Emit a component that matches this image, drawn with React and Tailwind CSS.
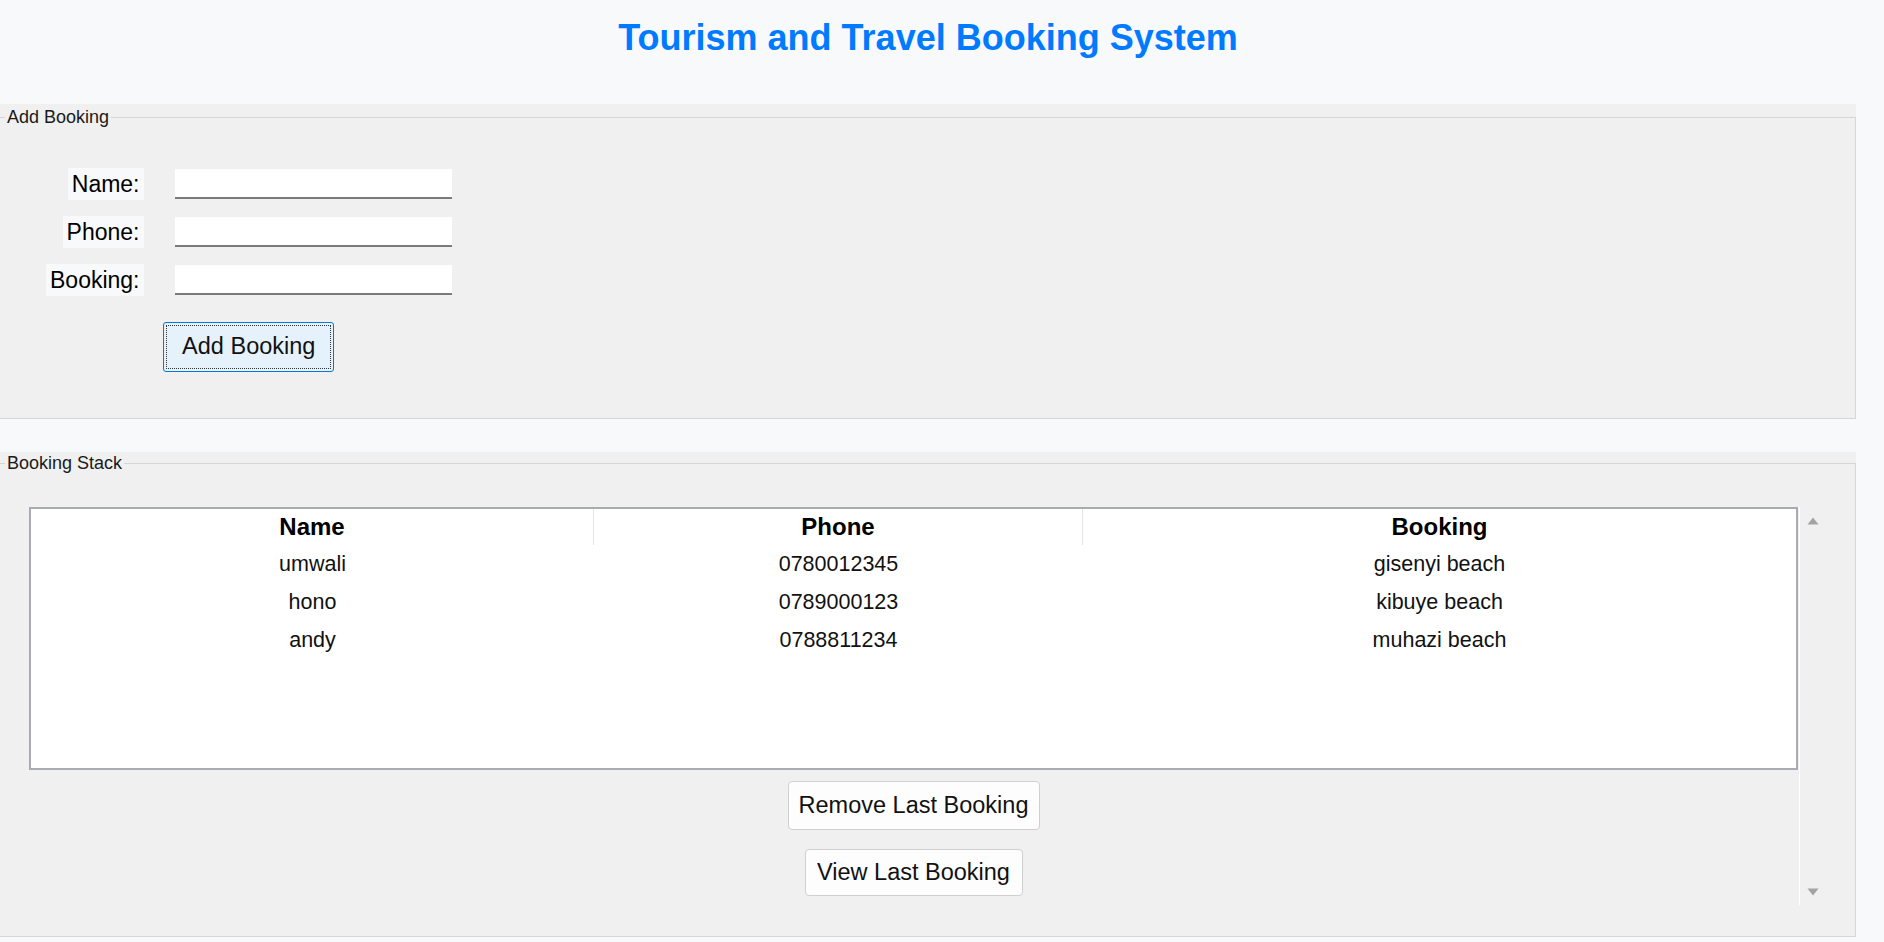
const bookings = [
  { name: 'umwali', phone: '0780012345', booking: 'gisenyi beach' },
  { name: 'hono', phone: '0789000123', booking: 'kibuye beach' },
  { name: 'andy', phone: '0788811234', booking: 'muhazi beach' },
];

// Tk-style LabelFrame: grey panel with a grooved box and a caption on its top edge
function LabelFrame({ title, top, boxHeight, children }) {
  return (
    <div className={`bg-[#f0f0f0] ${top}`}>
      <div className={`relative border border-l-0 border-[#d6d6d6] ${boxHeight}`}>
        <span className="absolute left-[5px] top-[-11px] bg-[#f0f0f0] px-[2px] text-[18px] leading-[20px] text-[#1a1a1a]">
          {title}
        </span>
        {children}
      </div>
    </div>
  );
}

function FieldLabel({ children }) {
  return (
    <div className="justify-self-end h-[32px] px-[4px] flex items-center bg-[#f8f9fa] text-[23px] text-black">
      {children}
    </div>
  );
}

function Entry() {
  return <div className="self-center h-[30px] w-[277px] bg-white border-b-2 border-[#7a7a7a]" />;
}

function PlainButton({ width, height, children }) {
  return (
    <button className={`${width} ${height} bg-[#fdfdfd] border border-[#d0d0d0] rounded-[4px] text-[23.5px] text-[#111] flex items-center justify-center`}>
      {children}
    </button>
  );
}

export default function App() {
  return (
    <div className="min-h-screen bg-[#f8f9fa] font-['Liberation_Sans',Arial,sans-serif]">
      <div className="w-[1856px]">
        <h1 className="h-[104px] pt-[18px] text-center text-[36px] leading-[40px] font-bold text-[#007bff]">
          Tourism and Travel Booking System
        </h1>

        <LabelFrame title="Add Booking" top="pt-[13px]" boxHeight="h-[302px]">
          <div className="pt-[50px] pl-[46px]">
            <div className="grid grid-cols-[auto_277px] gap-x-[31px] gap-y-[16px] w-fit">
              <FieldLabel>Name:</FieldLabel>
              <Entry />
              <FieldLabel>Phone:</FieldLabel>
              <Entry />
              <FieldLabel>Booking:</FieldLabel>
              <Entry />
              <button className="col-span-2 justify-self-center mt-[10px] w-[171px] h-[50px] p-[2px] bg-[#e5f1fb] border border-[#0078d7] rounded-[3px]">
                <span className="h-full flex items-center justify-center border border-dotted border-[#333] text-[23.5px] text-[#111]">
                  Add Booking
                </span>
              </button>
            </div>
          </div>
        </LabelFrame>

        <div className="h-[33px]" />

        <LabelFrame title="Booking Stack" top="pt-[11px]" boxHeight="h-[474px]">
          <div className="pt-[43px] pl-[29px] flex items-start">
            <div className="w-[1769px] flex flex-col items-center">
              <div className="w-full h-[263px] bg-white border-2 border-[#a8acb2] text-black">
                <div className="grid grid-cols-[563px_489px_1fr] h-[36px] text-[24px] font-bold">
                  <div className="flex items-center justify-center border-r border-[#e5e5e5]">Name</div>
                  <div className="flex items-center justify-center border-r border-[#e5e5e5]">Phone</div>
                  <div className="flex items-center justify-center">Booking</div>
                </div>
                {bookings.map((b) => (
                  <div key={b.phone} className="grid grid-cols-[563px_489px_1fr] h-[38px] text-[21.5px] text-[#111]">
                    <div className="flex items-center justify-center">{b.name}</div>
                    <div className="flex items-center justify-center">{b.phone}</div>
                    <div className="flex items-center justify-center">{b.booking}</div>
                  </div>
                ))}
              </div>
              <div className="mt-[11px]">
                <PlainButton width="w-[252px]" height="h-[49px]">Remove Last Booking</PlainButton>
              </div>
              <div className="mt-[19px]">
                <PlainButton width="w-[218px]" height="h-[47px]">View Last Booking</PlainButton>
              </div>
            </div>
            <div className="w-[26px] h-[398px] ml-[1px] border-l border-white flex flex-col items-center justify-between pt-[10px] pb-[9px]">
              <svg width="12" height="8" viewBox="0 0 12 8">
                <path d="M6 0.5 L11.5 7.5 L0.5 7.5 Z" fill="#a3a3a3" />
              </svg>
              <svg width="12" height="8" viewBox="0 0 12 8">
                <path d="M0.5 0.5 L11.5 0.5 L6 7.5 Z" fill="#a3a3a3" />
              </svg>
            </div>
          </div>
        </LabelFrame>
      </div>
    </div>
  );
}
